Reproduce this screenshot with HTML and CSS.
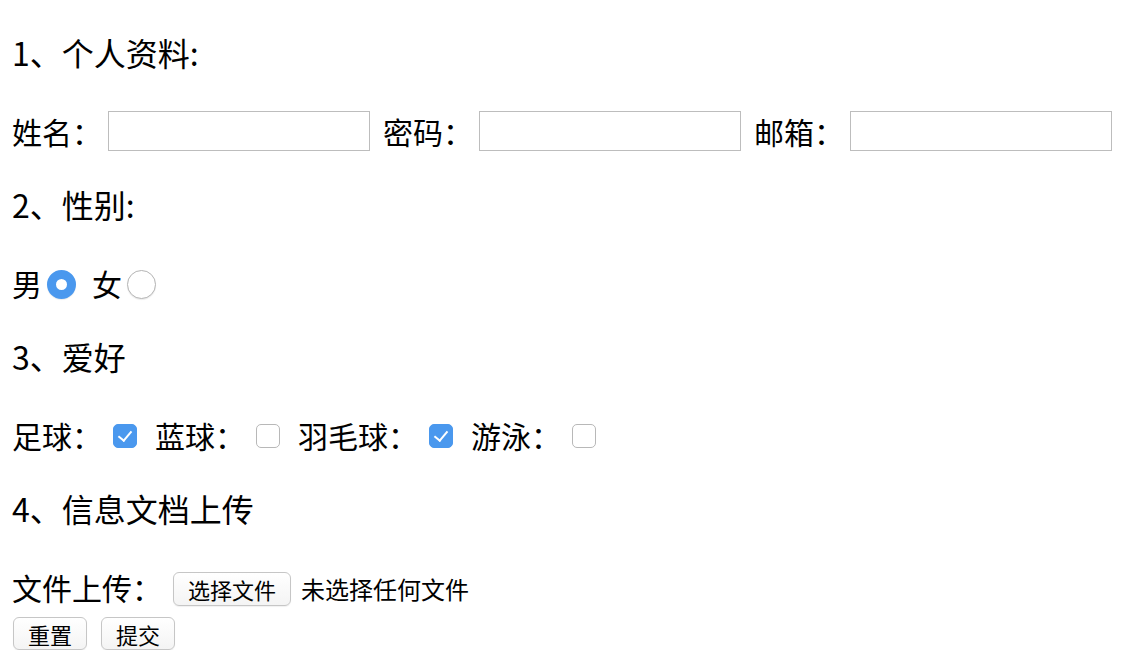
FILE: index.html
```html
<!DOCTYPE html>
<html lang="zh-CN">

<head>
    <meta charset="UTF-8">
    <meta name="viewport" content="width=device-width, initial-scale=1.0">
    <title>表单</title>
    <link rel="stylesheet" href="styles.css">
</head>

<body>
    <form class="form">
        <p class="title">1、个人资料:</p>
        <div class="row">
            <label class="label">姓名：</label>
            <input class="text-input" type="text">
            <label class="label">密码：</label>
            <input class="text-input" type="password">
            <label class="label">邮箱：</label>
            <input class="text-input" type="email">
        </div>

        <p class="title">2、性别:</p>
        <div class="row">
            <label class="choice">男<input class="radio" type="radio" name="sex" checked></label>
            <label class="choice">女<input class="radio" type="radio" name="sex"></label>
        </div>

        <p class="title">3、爱好</p>
        <div class="row">
            <label class="check">足球：<input class="box" type="checkbox" checked></label>
            <label class="check">蓝球：<input class="box" type="checkbox"></label>
            <label class="check">羽毛球：<input class="box" type="checkbox" checked></label>
            <label class="check">游泳：<input class="box" type="checkbox"></label>
        </div>

        <p class="title">4、信息文档上传</p>
        <div class="upload">
            <div class="row">
                <span class="label">文件上传：</span>
                <button type="button" class="btn file-btn">选择文件</button>
                <span class="file-name">未选择任何文件</span>
            </div>
            <div class="actions">
                <button type="reset" class="btn">重置</button>
                <button type="button" class="btn">提交</button>
            </div>
        </div>
    </form>
</body>

</html>
```

FILE: styles.css
```css
body {
    margin: 0;
    font-family: "Noto Sans CJK SC", "Noto Sans", sans-serif;
    color: #000;
    background: #fff;
}

.form {
    display: flex;
    flex-direction: column;
    gap: 32px;
    padding: 33px 12px 0;
}

.title {
    margin: 0;
    font-size: 32px;
    line-height: 38px;
    height: 44px;
}

.row {
    display: flex;
    align-items: center;
    height: 44px;
    font-size: 30px;
}

.label {
    white-space: nowrap;
}

.text-input {
    width: 262px;
    height: 40px;
    box-sizing: border-box;
    border: 1px solid #bdbdbd;
    margin: 0 13px 0 6px;
    padding: 0 6px;
    font-size: 20px;
    outline: none;
}

/* radios */
.choice {
    display: flex;
    align-items: center;
    margin-right: 16px;
}

.radio {
    appearance: none;
    width: 29px;
    height: 29px;
    margin: 3px 0 0 5px;
    border-radius: 50%;
    border: 1px solid #b4b4b4;
    background: #fff;
    box-sizing: border-box;
    box-shadow: 0 1px 1px rgba(0, 0, 0, 0.08);
}

.radio:checked {
    border: 9px solid #4a98ee;
    background: #fff;
}

/* checkboxes */
.check {
    display: flex;
    align-items: center;
}

.box {
    appearance: none;
    width: 24px;
    height: 24px;
    margin: 2px 18px 0 11px;
    border-radius: 5px;
    border: 1px solid #b8b8b8;
    background: #fff;
    box-sizing: border-box;
    position: relative;
}

.box:checked {
    border-color: #4a98ee;
    background: #4a98ee;
}

.box:checked::after {
    content: '';
    position: absolute;
    left: 7px;
    top: 3px;
    width: 6px;
    height: 11px;
    border: solid #fff;
    border-width: 0 2px 2px 0;
    transform: rotate(40deg);
}

/* upload and buttons */
.upload {
    display: flex;
    flex-direction: column;
    gap: 8px;
}

.btn {
    font-family: "Noto Sans CJK SC", "Noto Sans", sans-serif;
    font-size: 22px;
    line-height: 1;
    height: 33px;
    padding: 0 14px;
    border: 1px solid #c6c6c6;
    border-radius: 6px;
    background: linear-gradient(#ffffff, #f4f4f4);
    box-shadow: 0 1px 1px rgba(0, 0, 0, 0.06);
    color: #000;
}

.file-btn {
    height: 34px;
    margin: 3px 10px 0 11px;
}

.file-name {
    font-size: 24px;
    margin-top: 3px;
}

.actions {
    display: flex;
    gap: 14px;
    padding-left: 1px;
}
```
